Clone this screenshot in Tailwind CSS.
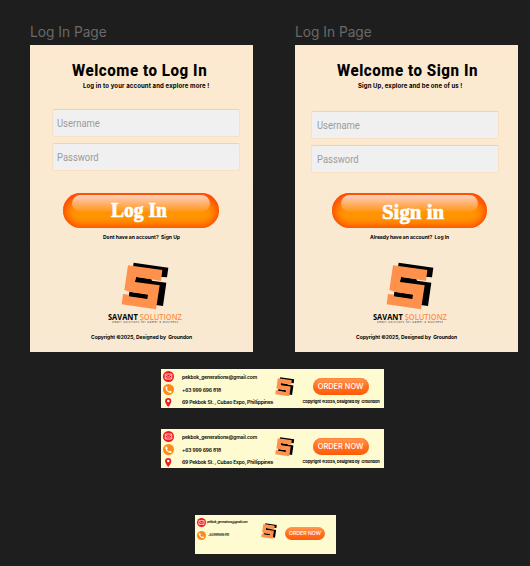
<!DOCTYPE html>
<html lang="en">
<head>
<meta charset="utf-8">
<title>Savant Solutionz</title>
<script src="https://cdn.jsdelivr.net/npm/@tailwindcss/browser@4"></script>
</head>
<body class="h-[566px] w-[530px] overflow-hidden bg-[#1e1e1e] font-['Inter',sans-serif] text-black">
<svg class="hidden">
  <symbol id="logo" viewBox="92 36 144 144">
    <path fill="#000" d="M130 38 234 53 230 82 205 80 207 62 128 50ZM137 80 183 87 185 92 228 98 218 168 196 165 200 110 132 98ZM117 125 175 133 173 149 115 140Z"/>
    <path fill="#ff914d" d="M113 46 216 60 212 93 182 88 137 81 134 96 208 106 197 178 94 163 98 132 116 134 115 139 171 147 173 134 117 125 102 120Z"/>
  </symbol>
  <symbol id="mail" viewBox="0 0 22 22">
    <circle cx="11" cy="11" r="11" fill="#f5151b"/>
    <rect x="4.5" y="6" width="13" height="10" rx="1" fill="none" stroke="#fff" stroke-width="1.6"/>
    <path d="M5 7l6 5 6-5M5 15.500l4-4M17 15.500l-4-4" fill="none" stroke="#fff" stroke-width="1.3"/>
  </symbol>
  <symbol id="phone" viewBox="0 0 22 22">
    <circle cx="11" cy="11" r="11" fill="#ff8a16"/>
    <path d="M7 4.500 9.500 8.500 8 10.500Q9 13 12 14.500L14 13 17.500 15.500Q17 18 14.500 18 10 17.500 7 13.500 4 9.500 5 6Q5.500 4.800 7 4.500Z" fill="#fff"/>
  </symbol>
  <symbol id="pin" viewBox="0 0 14 20">
    <path d="M7 0a7 7 0 0 1 7 7q0 4-7 13Q0 11 0 7a7 7 0 0 1 7-7Z" fill="#ed1c24"/><circle cx="7" cy="6.800" r="2.800" fill="#fff"/>
  </symbol>
</svg>

<main class="flex flex-col">
  <section class="flex gap-[42px] pl-[30px] pt-[22px]">
    <article class="w-[223px]">
      <h2 class="h-[23px] text-[14px] leading-5 whitespace-nowrap text-[#696969]"><span class="inline-block origin-left scale-x-[.98]">Log In Page</span></h2>
      <div class="flex h-[307px] flex-col items-start bg-[#fbead1] bg-linear-to-b from-[#fce9d0] to-[#f9e9d2] pt-[15px] whitespace-nowrap">
        <h1 class="ml-[42px] font-['Roboto',sans-serif] text-[17px] leading-5 font-extrabold tracking-[.6px]"><span class="inline-block origin-left scale-x-[.89]">Welcome to Log In</span></h1>
        <p class="mt-[2px] ml-[53px] text-[6px] leading-2 font-bold tracking-[.14px]">Log in to your account and explore more !</p>
        <div class="mt-[18.5px] ml-[22px] h-[28px] w-[188px] rounded-[2px] border border-[#fae0c2] border-t-[#f5d2aa] bg-[#f0f0f0] pl-[4px] font-['Roboto',sans-serif] text-[11.500px] leading-[27px] text-[#9b9b9b]"><span class="inline-block origin-left scale-x-[.82]">Username</span></div>
        <div class="mt-[6.500px] ml-[22px] h-[28px] w-[188px] rounded-[2px] border border-[#fae0c2] border-t-[#f5d2aa] bg-[#f0f0f0] pl-[4px] font-['Roboto',sans-serif] text-[11.500px] leading-[27px] text-[#9b9b9b]"><span class="inline-block origin-left scale-x-[.82]">Password</span></div>
        <div class="mt-[22px] ml-[33px] h-[35px] w-[156px] rounded-full bg-linear-to-b from-[#ff6b10] to-[#ff9500] to-60% px-[9px] pt-[2px] shadow-[inset_0_0_8px_2px_#ff3c00]">
          <div class="h-[17px] rounded-full bg-linear-to-b from-white/75 to-white/5"></div>
          <div class="-mt-[15px] ml-[39px] font-['Liberation_Serif',serif] text-[21.500px] leading-[26px] font-bold text-white [-webkit-text-stroke:0.7px_white]"><span class="inline-block origin-left scale-x-[.91]">Log In</span></div>
        </div>
        <p class="mt-[5px] ml-[73px] text-[5px] leading-2 font-bold whitespace-pre">Dont have an account?  Sign Up</p>
        <svg class="mt-[21px] ml-[91px] size-[48px] shrink-0"><use href="#logo"/></svg>
        <p class="mt-[2px] ml-[78px] h-[9px] font-['Open_Sans',sans-serif] text-[8.500px] leading-[9px] font-bold"><span class="inline-block origin-left scale-x-[.88]">SAVANT <span class="font-semibold text-[#ff914d]">SOLUTIONZ</span></span></p>
        <p class="ml-[82px] h-[4px] text-[2.500px] leading-[4px] tracking-[.6px] text-[#333]">Smart Solutions for Gamer &amp; Business</p>
        <p class="mt-[8px] ml-[61px] text-[5px] leading-2 font-bold tracking-[-.04px] whitespace-pre">Copyright ©2025, Designed by  Groundon</p>
      </div>
    </article>
    <article class="w-[223px]">
      <h2 class="h-[23px] text-[14px] leading-5 whitespace-nowrap text-[#696969]"><span class="inline-block origin-left scale-x-[.98]">Log In Page</span></h2>
      <div class="flex h-[307px] flex-col items-start bg-[#fbead1] bg-linear-to-b from-[#fce9d0] to-[#f9e9d2] pt-[15px] whitespace-nowrap">
        <h1 class="ml-[42px] font-['Roboto',sans-serif] text-[17px] leading-5 font-extrabold tracking-[.6px]"><span class="inline-block origin-left scale-x-[.89]">Welcome to Sign In</span></h1>
        <p class="mt-[2px] ml-[63px] text-[6px] leading-2 font-bold tracking-[.1px]">Sign Up, explore and be one of us !</p>
        <div class="mt-[20.500px] ml-[16px] h-[28px] w-[188px] rounded-[2px] border border-[#fae0c2] border-t-[#f5d2aa] bg-[#f0f0f0] pl-[5px] font-['Roboto',sans-serif] text-[11.500px] leading-[27px] text-[#9b9b9b]"><span class="inline-block origin-left scale-x-[.82]">Username</span></div>
        <div class="mt-[6.500px] ml-[16px] h-[28px] w-[188px] rounded-[2px] border border-[#fae0c2] border-t-[#f5d2aa] bg-[#f0f0f0] pl-[5px] font-['Roboto',sans-serif] text-[11.500px] leading-[27px] text-[#9b9b9b]"><span class="inline-block origin-left scale-x-[.82]">Password</span></div>
        <div class="mt-[20px] ml-[37px] h-[35px] w-[155px] rounded-full bg-linear-to-b from-[#ff6b10] to-[#ff9500] to-60% px-[9px] pt-[2px] shadow-[inset_0_0_8px_2px_#ff3c00]">
          <div class="h-[17px] rounded-full bg-linear-to-b from-white/75 to-white/5"></div>
          <div class="-mt-[13px] ml-[41px] font-['Liberation_Serif',serif] text-[21.500px] leading-[26px] font-bold text-white [-webkit-text-stroke:0.7px_white]"><span class="inline-block origin-left scale-x-[.97]">Sign in</span></div>
        </div>
        <p class="mt-[5px] ml-[75px] text-[5px] leading-2 font-bold tracking-[-.04px] whitespace-pre">Already have an account?  Log In</p>
        <svg class="mt-[21px] ml-[91px] size-[48px] shrink-0"><use href="#logo"/></svg>
        <p class="mt-[2px] ml-[78px] h-[9px] font-['Open_Sans',sans-serif] text-[8.500px] leading-[9px] font-bold"><span class="inline-block origin-left scale-x-[.88]">SAVANT <span class="font-semibold text-[#ff914d]">SOLUTIONZ</span></span></p>
        <p class="ml-[82px] h-[4px] text-[2.500px] leading-[4px] tracking-[.6px] text-[#333]">Smart Solutions for Gamer &amp; Business</p>
        <p class="mt-[8px] ml-[61px] text-[5px] leading-2 font-bold tracking-[-.04px] whitespace-pre">Copyright ©2025, Designed by  Groundon</p>
      </div>
    </article>
  </section>

  <footer class="mt-[17px] ml-[161px] flex h-[39px] w-[223px] bg-[#fffbd1] whitespace-nowrap">
    <div class="flex w-[21px] flex-col items-center pt-[2px] pr-[6px]">
      <svg class="size-[11px]"><use href="#mail"/></svg>
      <svg class="mt-[2px] size-[11px]"><use href="#phone"/></svg>
      <svg class="mt-[3px] h-[9px] w-[6.500px]"><use href="#pin"/></svg>
    </div>
    <div class="w-[93px] pt-[3px] text-[5px] leading-[10px] font-semibold tracking-[-.15px]">
      <p class="h-[13px]">pekbok_generations@gmail.com</p>
      <p class="h-[12px]">+63 999 696 818</p>
      <p>69 Pekbok St. , Cubao Expo, Phillippines</p>
    </div>
    <svg class="mt-[7.500px] size-[19.500px] shrink-0"><use href="#logo"/></svg>
    <div class="ml-[8px] pt-[9px]">
      <div class="ml-[10px] h-[17px] w-[56px] rounded-full bg-linear-to-b from-[#ff9a55] via-[#ff7120] to-[#ff5c05] text-center text-[7px] leading-[17px] font-medium text-white shadow-[inset_0_0_2px_#ff5a00]"><span class="inline-block scale-x-[1.06]">ORDER NOW</span></div>
      <p class="mt-[4px] text-[4px] leading-[6px] font-bold tracking-[-.13px] whitespace-pre">Copyright ©2025, Designed by  Groundon</p>
    </div>
  </footer>

  <footer class="mt-[21px] ml-[161px] flex h-[39px] w-[223px] bg-[#fffbd1] whitespace-nowrap">
    <div class="flex w-[21px] flex-col items-center pt-[2px] pr-[6px]">
      <svg class="size-[11px]"><use href="#mail"/></svg>
      <svg class="mt-[2px] size-[11px]"><use href="#phone"/></svg>
      <svg class="mt-[3px] h-[9px] w-[6.500px]"><use href="#pin"/></svg>
    </div>
    <div class="w-[93px] pt-[3px] text-[5px] leading-[10px] font-semibold tracking-[-.15px]">
      <p class="h-[13px]">pekbok_generations@gmail.com</p>
      <p class="h-[12px]">+63 999 696 818</p>
      <p>69 Pekbok St. , Cubao Expo, Phillippines</p>
    </div>
    <svg class="mt-[7.500px] size-[19.500px] shrink-0"><use href="#logo"/></svg>
    <div class="ml-[8px] pt-[9px]">
      <div class="ml-[10px] h-[17px] w-[56px] rounded-full bg-linear-to-b from-[#ff9a55] via-[#ff7120] to-[#ff5c05] text-center text-[7px] leading-[17px] font-medium text-white shadow-[inset_0_0_2px_#ff5a00]"><span class="inline-block scale-x-[1.06]">ORDER NOW</span></div>
      <p class="mt-[4px] text-[4px] leading-[6px] font-bold tracking-[-.13px] whitespace-pre">Copyright ©2025, Designed by  Groundon</p>
    </div>
  </footer>

  <footer class="mt-[47px] ml-[195px] flex h-[39px] w-[141px] bg-[#fffbd1] whitespace-nowrap">
    <div class="flex w-[12px] flex-col pt-[3px] pl-[2px]">
      <svg class="size-[9px]"><use href="#mail"/></svg>
      <svg class="mt-[4px] size-[9px]"><use href="#phone"/></svg>
    </div>
    <div class="w-[54px] pt-[5px] text-[3px] leading-[5px] font-semibold tracking-[-.25px]">
      <p class="h-[13px]">pekbok_generations@gmail.com</p>
      <p class="pl-[1px]">+63 999 696 818</p>
    </div>
    <svg class="mt-[8px] size-[16px] shrink-0"><use href="#logo"/></svg>
    <div class="mt-[11.500px] ml-[8px] h-[13px] w-[40px] rounded-full bg-linear-to-b from-[#ff9a55] via-[#ff7120] to-[#ff5c05] text-center text-[5.200px] leading-[13px] font-medium text-white">ORDER NOW</div>
  </footer>
</main>
</body>
</html>
